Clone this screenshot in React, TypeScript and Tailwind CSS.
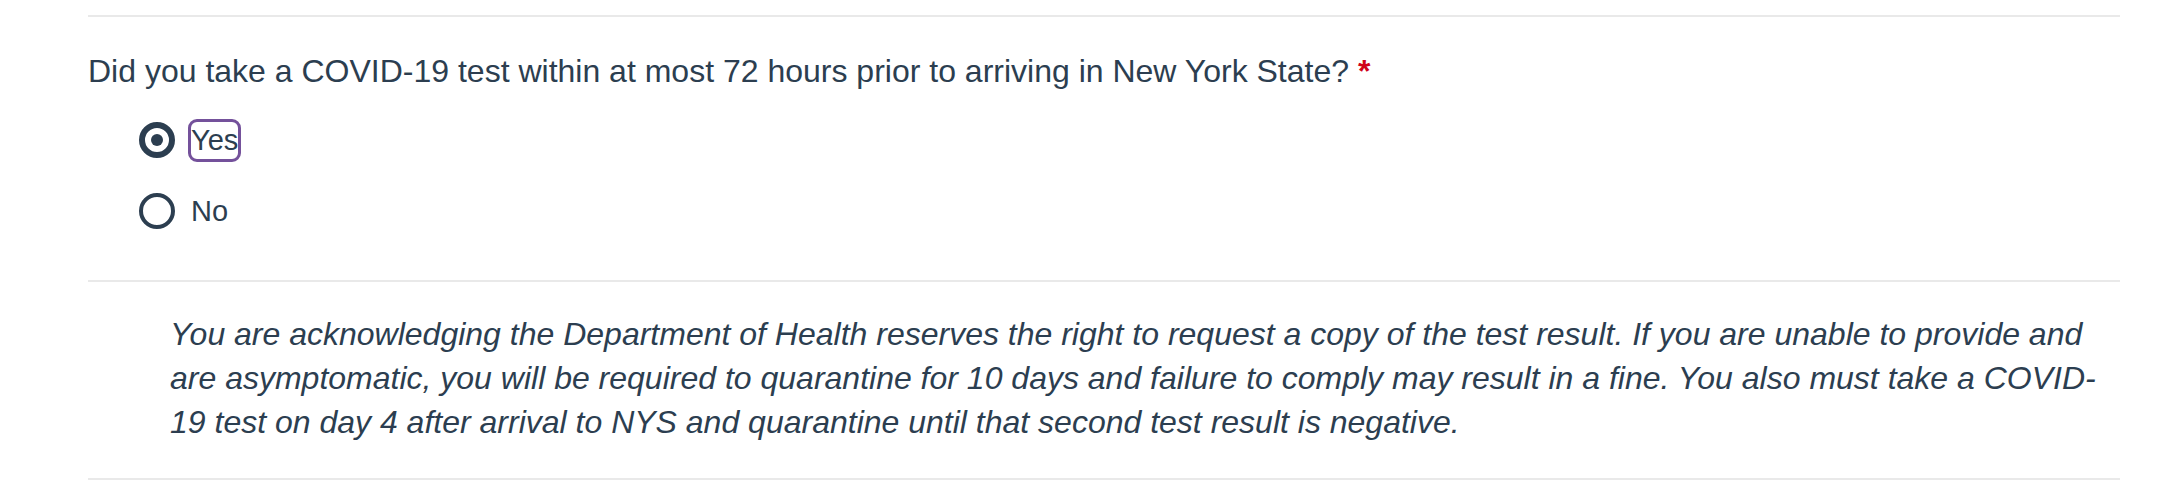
import React from "react";

export default function App() {
  return (
    <div className="min-h-[498px] w-full bg-white font-['Liberation_Sans',Arial,Helvetica,sans-serif] text-[#2c3e50]">
      <div className="ml-[88px] mr-[42px] pt-[15px]">
        <div className="border-t-2 border-[#e9e9e9]">
          <div className="mt-[32px] text-[32px] leading-[44px]">
            Did you take a COVID-19 test within at most 72 hours prior to arriving in New York State?{" "}
            <span className="font-bold text-[#d0021b]">*</span>
          </div>
          <div className="ml-[51px] mt-[23px] flex flex-col gap-[23px]">
            <div className="flex h-12 items-center gap-4">
              <span className="flex h-9 w-9 items-center justify-center rounded-full border-[6px] border-[#2c3e50]">
                <span className="h-3 w-3 rounded-full bg-[#2c3e50]" />
              </span>
              <span className="rounded-md text-[29px] leading-[37px] outline-3 outline-[#74519b]">Yes</span>
            </div>
            <div className="flex h-12 items-center gap-4">
              <span className="h-9 w-9 rounded-full border-4 border-[#2c3e50]" />
              <span className="text-[29px] leading-[37px]">No</span>
            </div>
          </div>
        </div>
        <div className="mt-[45px] border-t-2 border-[#e9e9e9]">
          <p className="pb-[34px] pl-[82px] pr-[10px] pt-[30px] text-[32px] italic leading-[44px]">
            You are acknowledging the Department of Health reserves the right to request a copy of the test result. If you are unable to provide and are asymptomatic, you will be required to quarantine for 10 days and failure to comply may result in a fine. You also must take a COVID-19 test on day 4 after arrival to NYS and quarantine until that second test result is negative.
          </p>
        </div>
        <div className="border-t-2 border-[#e9e9e9]" />
      </div>
    </div>
  );
}
